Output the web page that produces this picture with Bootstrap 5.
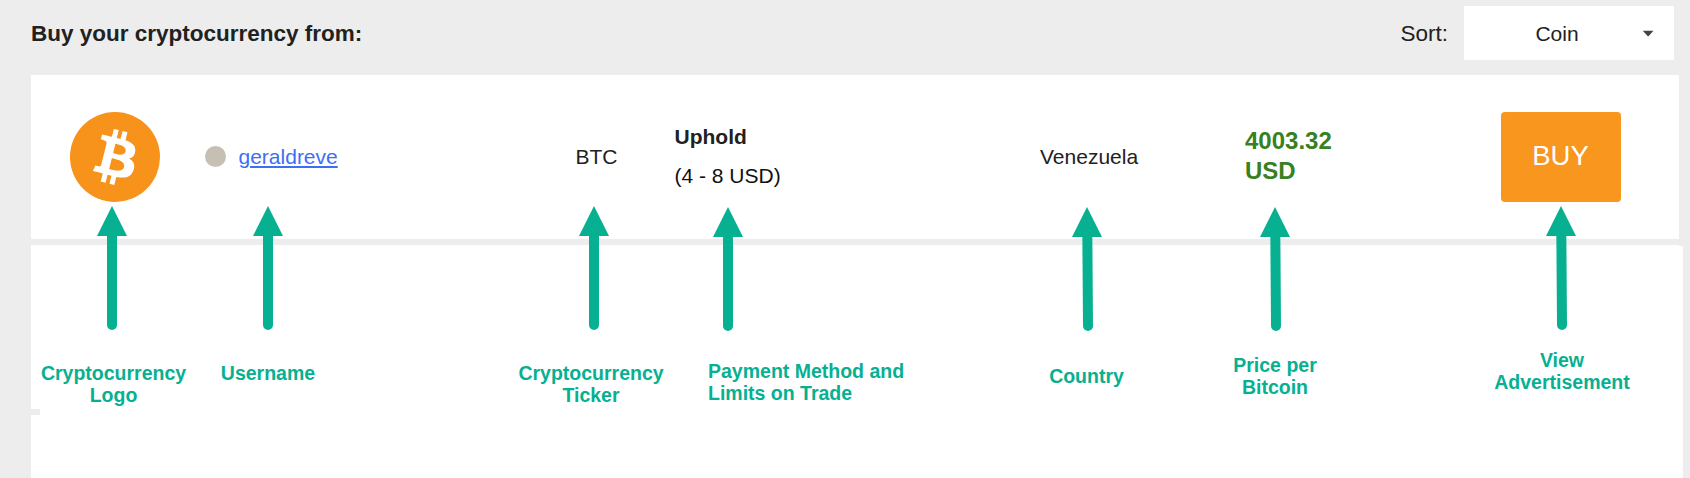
<!DOCTYPE html>
<html lang="en">
<head>
<meta charset="utf-8">
<meta name="viewport" content="width=device-width, initial-scale=1">
<title>Buy your cryptocurrency</title>
<link href="https://cdn.jsdelivr.net/npm/bootstrap@5.3.0/dist/css/bootstrap.min.css" rel="stylesheet">
<style>
  body { background: #ededed; color: #212121; font-family: "Liberation Sans", Arial, sans-serif; font-size: 21px; line-height: 24px; height: 478px; overflow: hidden; }
  .topbar { height: 75px; padding: 6px 16px 15px 31px; }
  .topbar h1 { font-size: 22.5px; line-height: 56px; font-weight: 700; }
  .sort-label { font-size: 22.5px; margin-right: 16px; padding-top: 1px; }
  .sort-btn { width: 210px; height: 54px; font-size: 21px; color: #212121; }
  .sort-btn span { padding: 2px 0 0 12px; }
  .offers { padding-left: 31px; }
  .offer { width: 1648px; height: 164px; grid-template-columns: 173.5px 371px 99px 365.5px 205px 256px 120px; margin-bottom: 6px; }
  .coin-logo { margin-left: 39px; }
  .status-dot { width: 21px; height: 21px; background: #c5c0b1; margin: 0 13px 2px 0; }
  .user-link { color: #3d6ff5; text-decoration-thickness: 2px; text-underline-offset: 2px; }
  .limits { line-height: 39px; color: #111; padding-bottom: 2px; }
  .limits strong { color: #212121; }
  .price { font-size: 24px; line-height: 30px; color: #388020; width: 100px; padding-bottom: 2px; }
  .buy-btn, .buy-btn:hover { height: 90px; background: #f8961e; color: #fff; font-size: 27.5px; border-radius: 4px; padding: 0 1px 2px 0; }
  .legend { width: 1652px; height: 233px; grid-template-columns: 165px 144px 160px 182px 26px 220px 73px 171px 17px 172px 89px 224px; grid-template-rows: 163px 70px; color: #07b091; font-size: 19.5px; line-height: 22px; font-weight: 700; }
  .edge { width: 1648px; height: 1px; }
  .divider-stub { width: 9px; height: 6px; background: #ededed; grid-column: 1; grid-row: 2; }
  .d-1 { padding-top: 116px; } .d-2 { padding-top: 114px; } .d-3 { padding-top: 119px; }
  .d-4 { padding-top: 108px; } .d-5 { padding-top: 103px; }
  .arrows { left: 0; top: 200px; color: #07b091; pointer-events: none; }
</style>
</head>
<body class="position-relative">
<header class="topbar d-flex justify-content-between">
  <h1 class="m-0">Buy your cryptocurrency from:</h1>
  <div class="d-flex align-items-center">
    <span class="sort-label">Sort:</span>
    <button type="button" class="sort-btn btn bg-white border-0 rounded-0 d-flex align-items-center p-0">
      <span class="flex-grow-1 text-center">Coin</span>
      <svg class="me-3" width="20" height="20" viewBox="0 0 20 20"><path d="M4.8 7.8h10.7l-5 5.4h-.7z" fill="#444"/></svg>
    </button>
  </div>
</header>

<main class="offers">
  <section class="offer d-grid align-items-center bg-white">
    <svg class="coin-logo" width="90" height="90" viewBox="0 0 32 32" role="img" aria-label="Bitcoin">
      <circle cx="16" cy="16" r="16" fill="#f7931a"/>
      <path fill="#fff" d="M23.189 14.02c.314-2.096-1.283-3.223-3.465-3.975l.708-2.84-1.728-.43-.69 2.765c-.454-.114-.92-.22-1.385-.326l.695-2.783L15.596 6l-.708 2.839c-.376-.086-.746-.17-1.104-.26l.002-.009-2.384-.595-.46 1.846s1.283.294 1.256.312c.7.175.826.638.805 1.006l-.806 3.235c.048.012.11.03.18.057l-.183-.045-1.13 4.532c-.086.212-.303.531-.793.41.018.025-1.256-.313-1.256-.313l-.858 1.978 2.25.561c.418.105.828.215 1.231.318l-.715 2.872 1.727.43.708-2.84c.472.127.93.245 1.378.357l-.706 2.828 1.728.43.715-2.866c2.948.558 5.164.333 6.097-2.333.752-2.146-.037-3.385-1.588-4.192 1.13-.26 1.98-1.003 2.207-2.538zm-3.95 5.538c-.533 2.147-4.148.986-5.32.695l.95-3.805c1.172.293 4.929.872 4.37 3.11zm.535-5.569c-.487 1.953-3.495.96-4.47.717l.86-3.45c.975.243 4.118.696 3.61 2.733z"/>
    </svg>
    <div class="d-flex align-items-center">
      <span class="status-dot rounded-circle"></span>
      <a class="user-link" href="#">geraldreve</a>
    </div>
    <div>BTC</div>
    <div class="limits"><strong>Uphold</strong><br>(4 - 8 USD)</div>
    <div>Venezuela</div>
    <div class="price fw-bold">4003.32 USD</div>
    <button type="button" class="buy-btn btn border-0">BUY</button>
  </section>

  <div class="edge bg-white"></div>
  <section class="legend d-grid bg-white text-center">
    <div class="d-1">Cryptocurrency<br>Logo</div>
    <div class="d-1">Username</div>
    <div></div>
    <div class="d-1">Cryptocurrency<br>Ticker</div>
    <div></div>
    <div class="d-2 text-start">Payment Method and<br>Limits on Trade</div>
    <div></div>
    <div class="d-3">Country</div>
    <div></div>
    <div class="d-4">Price per<br>Bitcoin</div>
    <div></div>
    <div class="d-5">View<br>Advertisement</div>
    <div class="divider-stub"></div>
  </section>
</main>

<!-- Arrows joining each offer field to its caption -->
<svg class="arrows position-absolute" width="1690" height="135" viewBox="0 200 1690 135" fill="currentColor" stroke="currentColor" aria-hidden="true">
  <g stroke="none">
    <path d="M112 206l15 30H97z"/>
    <path d="M268 206l15 30h-30z"/>
    <path d="M594 206l15 30h-30z"/>
    <path d="M728 207l15 30h-30z"/>
    <path d="M1087 207l15 30h-30z"/>
    <path d="M1275 207l15 30h-30z"/>
    <path d="M1561 206l15 30h-30z"/>
  </g>
  <path fill="none" stroke-width="10" stroke-linecap="round" d="M112 230V325M268 230V325M594 230V325M728 231V326M1087.3 231L1088 326M1275.3 231L1276 326M1561.3 230L1562 325"/>
</svg>
<script src="https://cdn.jsdelivr.net/npm/bootstrap@5.3.0/dist/js/bootstrap.bundle.min.js"></script>
</body>
</html>
